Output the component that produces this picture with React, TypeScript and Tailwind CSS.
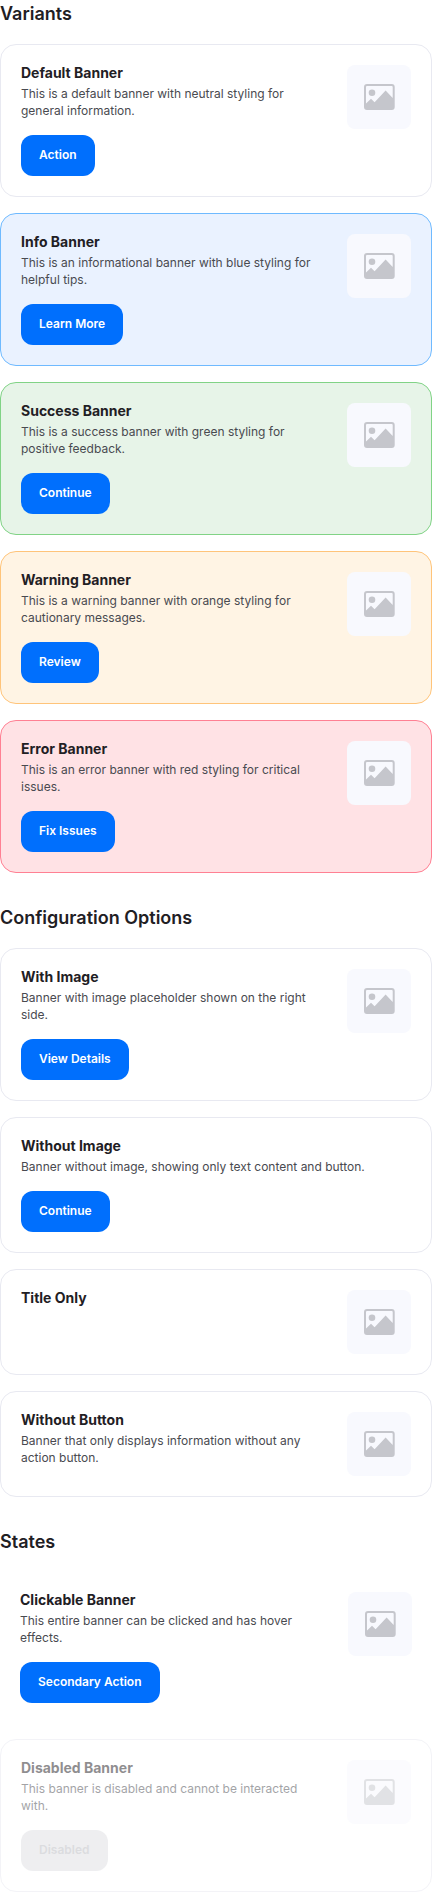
import React from "react";

type Variant = "default" | "info" | "success" | "warning" | "error";

interface BannerProps {
  title: string;
  description?: string;
  action?: string;
  variant?: Variant;
  image?: boolean;
  clickable?: boolean;
  disabled?: boolean;
}

const variants: Record<Variant, string> = {
  default: "border-[#e8e9f1] bg-white",
  info: "border-[#6fbaff] bg-[#eaf2ff]",
  success: "border-[#81d386] bg-[#e7f4e8]",
  warning: "border-[#ffc47a] bg-[#fff4e4]",
  error: "border-[#ff8093] bg-[#ffe2e5]",
};

function Placeholder() {
  return (
    <div className="flex size-16 shrink-0 items-center justify-center rounded-lg bg-[#f8f9fe]">
      <svg width="32" height="26" viewBox="0 0 32 26" fill="#c5c6cc" aria-hidden="true">
        <path
          fillRule="evenodd"
          d="M4 0H28.7A3 3 0 0 1 31.7 3V23A3 3 0 0 1 28.7 26H4A3 3 0 0 1 1 23V3A3 3 0 0 1 4 0ZM4 2A1 1 0 0 0 3 3V19.4L8 14.7L11.6 18.2L22.6 6.6L29.7 14V3A1 1 0 0 0 28.7 2Z"
        />
        <circle cx="9" cy="8.7" r="3.3" />
      </svg>
    </div>
  );
}

function Banner({
  title,
  description,
  action,
  variant = "default",
  image = true,
  clickable = false,
  disabled = false,
}: BannerProps) {
  const frame = clickable ? "cursor-pointer bg-white" : "border " + variants[variant];
  return (
    <article
      className={
        "flex items-start gap-6 rounded-2xl p-5 " + frame + (disabled ? " opacity-50" : "")
      }
    >
      <div className="flex min-w-0 flex-1 flex-col items-start gap-4">
        <div className="flex flex-col gap-1">
          <h3 className="text-[14px] leading-4 font-bold text-[#1f2024]">{title}</h3>
          {description && (
            <p className="text-[12px] leading-[17px] text-[#494a50]">{description}</p>
          )}
        </div>
        {action && (
          <button
            type="button"
            disabled={disabled}
            className="h-[41px] rounded-xl bg-[#006ffd] px-[18px] pb-0.5 text-[12px] font-semibold text-white disabled:bg-[#dedfe3] disabled:text-[#b9bac0]"
          >
            {action}
          </button>
        )}
      </div>
      {image && <Placeholder />}
    </article>
  );
}

function Section({ title, children }: { title: string; children: React.ReactNode }) {
  return (
    <section className="flex flex-col gap-4">
      <h2 className="text-[18px] leading-7 font-semibold text-[#1f2024]">{title}</h2>
      {children}
    </section>
  );
}

export default function App() {
  return (
    <main className="flex flex-col gap-[31px] bg-white font-['Inter',sans-serif]">
      <Section title="Variants">
        <Banner
          title="Default Banner"
          description="This is a default banner with neutral styling for general information."
          action="Action"
        />
        <Banner
          variant="info"
          title="Info Banner"
          description="This is an informational banner with blue styling for helpful tips."
          action="Learn More"
        />
        <Banner
          variant="success"
          title="Success Banner"
          description="This is a success banner with green styling for positive feedback."
          action="Continue"
        />
        <Banner
          variant="warning"
          title="Warning Banner"
          description="This is a warning banner with orange styling for cautionary messages."
          action="Review"
        />
        <Banner
          variant="error"
          title="Error Banner"
          description="This is an error banner with red styling for critical issues."
          action="Fix Issues"
        />
      </Section>
      <Section title="Configuration Options">
        <Banner
          title="With Image"
          description="Banner with image placeholder shown on the right side."
          action="View Details"
        />
        <Banner
          image={false}
          title="Without Image"
          description="Banner without image, showing only text content and button."
          action="Continue"
        />
        <Banner title="Title Only" />
        <Banner
          title="Without Button"
          description="Banner that only displays information without any action button."
        />
      </Section>
      <Section title="States">
        <Banner
          clickable
          title="Clickable Banner"
          description="This entire banner can be clicked and has hover effects."
          action="Secondary Action"
        />
        <Banner
          disabled
          title="Disabled Banner"
          description="This banner is disabled and cannot be interacted with."
          action="Disabled"
        />
      </Section>
    </main>
  );
}
